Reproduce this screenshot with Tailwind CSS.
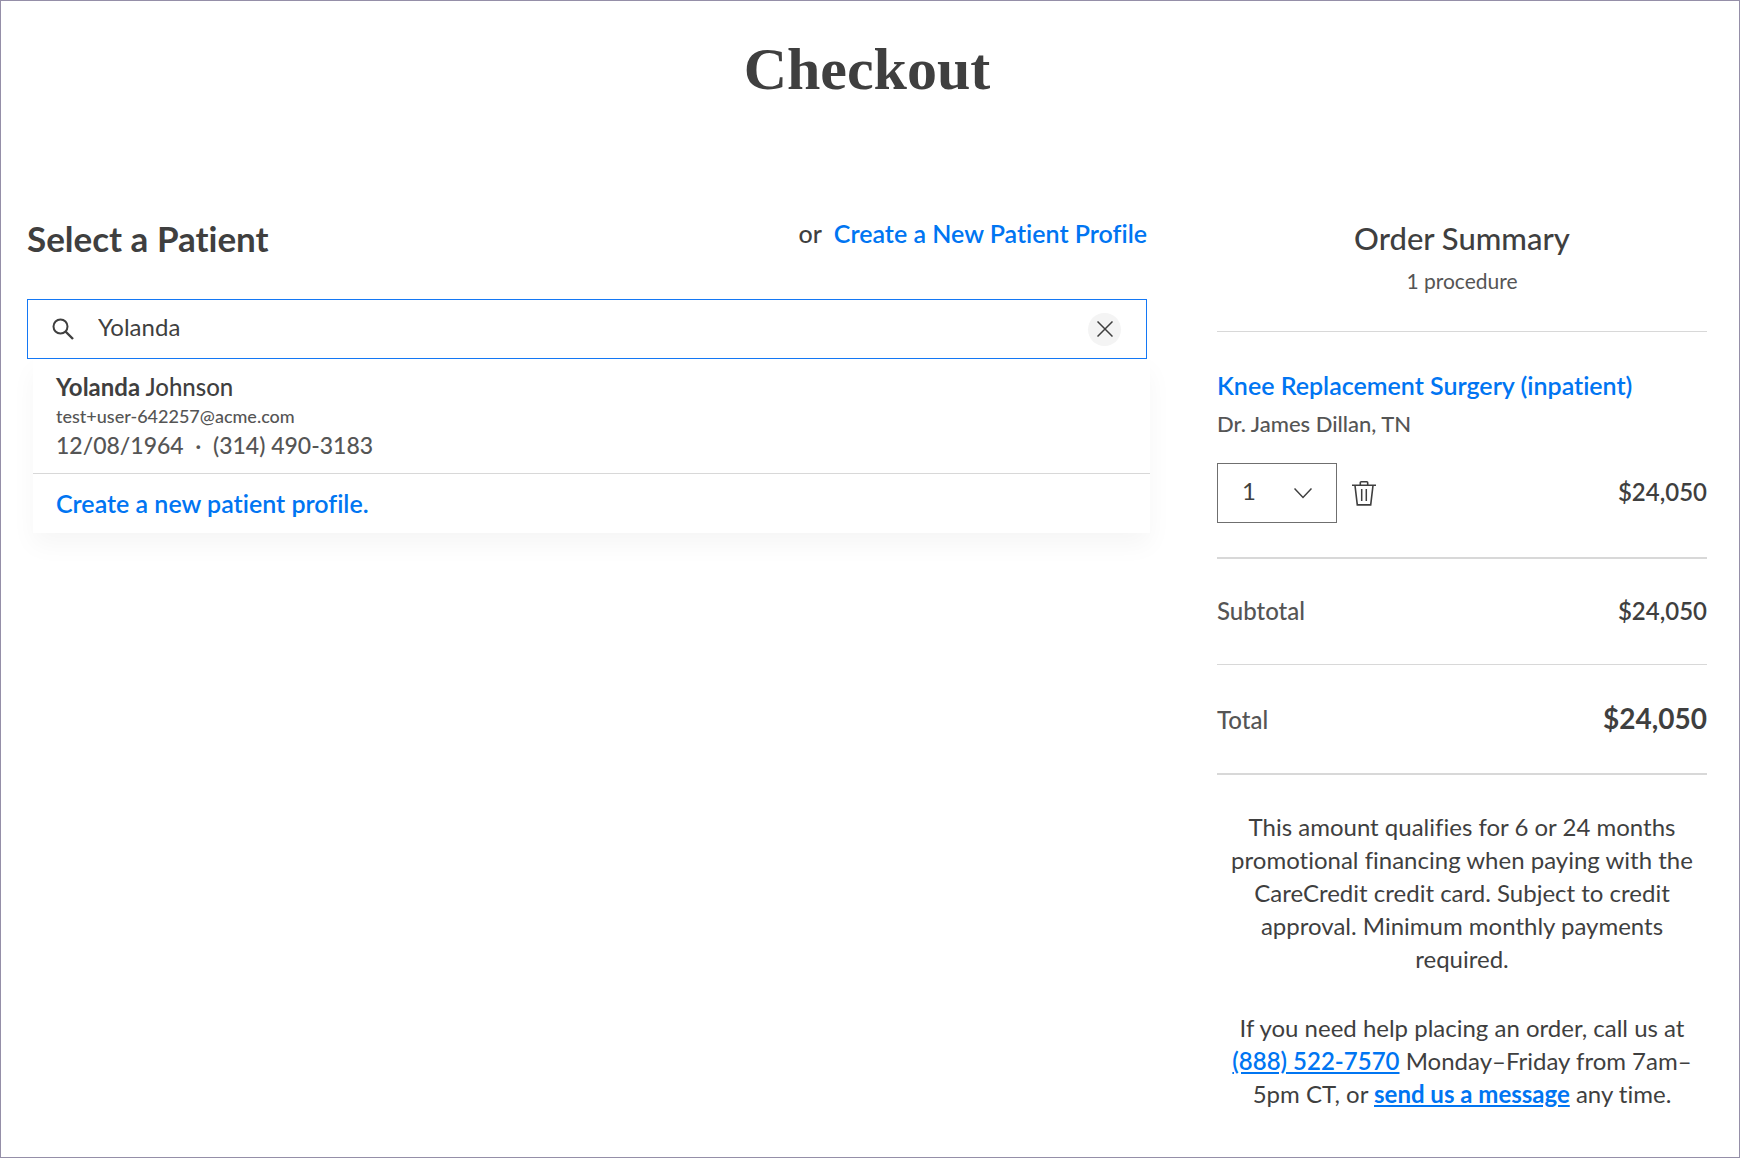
<!DOCTYPE html>
<html lang="en">
<head>
<meta charset="utf-8">
<meta name="viewport" content="width=device-width, initial-scale=1">
<title>Checkout</title>
<script src="https://cdn.jsdelivr.net/npm/@tailwindcss/browser@4"></script>
</head>
<body class="min-h-screen border border-[#958fa8] bg-white pt-[38px] pr-8 pb-9 pl-[26px] font-[Lato,sans-serif] text-2xl/8 text-[#3f3f3f] [font-variant-ligatures:none]">
  <header>
    <h1 class="text-center font-['Liberation_Serif',serif] text-[60px]/[60px] font-bold">Checkout</h1>
  </header>

  <main class="mt-[118px] flex items-start gap-[70px]">
    <section class="min-w-0 flex-1">
      <div class="mb-10 flex items-start justify-between">
        <h2 class="text-[35px]/[42px] font-bold">Select a Patient</h2>
        <p class="flex gap-3 text-[25px]/8 font-medium">or <a href="#new" class="font-semibold text-[#0075f2]">Create a New Patient Profile</a></p>
      </div>

      <div class="relative">
        <form role="search" class="flex h-[60px] items-center border border-[#1478f5] pr-[25px] pl-6">
          <label for="patient" class="mr-6" aria-label="Search patients">
            <svg class="size-[22px]" viewBox="0 0 22 22" fill="none" stroke="#3f3f3f" stroke-width="2"><circle cx="8.5" cy="8.5" r="7"/><path d="M13.5 13.5l7.5 7.5" stroke-width="2.4"/></svg>
          </label>
          <input id="patient" type="text" value="Yolanda" autocomplete="off" class="h-full min-w-0 flex-1 pb-1.5 outline-none">
          <button type="button" aria-label="Clear search" class="grid size-[33px] place-items-center rounded-full bg-[#f4f4f4]">
            <svg class="size-4" viewBox="0 0 16 16" fill="none" stroke="#3f3f3f" stroke-width="1.5"><path d="M.5.5l15 15M15.5.5l-15 15"/></svg>
          </button>
        </form>

        <!-- Matching patients -->
        <div class="absolute top-full -right-[3px] left-1.5 bg-white shadow-[0_12px_24px_rgba(0,0,0,0.04)]">
          <button type="button" class="block w-full px-[23px] py-3 text-left">
            <span class="block font-medium"><strong>Yolanda</strong> Johnson</span>
            <span class="block text-lg/[26px] font-medium text-[#555]">test+user-642257@acme.com</span>
            <span class="block text-[23px]/8 font-medium text-[#555]">12/08/1964 &nbsp;· &nbsp;(314) 490-3183</span>
          </button>
          <a href="#new" class="block border-t border-[#d8d8d8] px-[23px] pt-[13px] pb-3.5 text-[25px]/8 font-semibold text-[#0075f2]">Create a new patient profile.</a>
        </div>
      </div>
    </section>

    <aside class="w-[490px] shrink-0">
      <div class="border-b border-[#d8d8d8] pb-9 text-center">
        <h2 class="text-[31px]/[42px] font-medium">Order Summary</h2>
        <p class="mt-2 text-[21px]/7 text-[#555]">1 procedure</p>
      </div>

      <div class="border-b-2 border-[#d8d8d8] pt-[37px] pb-[34px]">
        <a href="#procedure" class="block text-[25px]/8 font-semibold text-[#0075f2]">Knee Replacement Surgery (inpatient)</a>
        <p class="mt-2 text-[22px]/[30px] font-medium text-[#555]">Dr. James Dillan, TN</p>
        <div class="mt-6 flex items-center">
          <div class="relative">
            <select aria-label="Quantity" class="h-[60px] w-[120px] appearance-none border border-[#6f6f6f] bg-white pb-1 pl-6"><option>1</option><option>2</option><option>3</option></select>
            <svg class="pointer-events-none absolute top-[25px] right-[25px] h-[11px] w-[18px]" viewBox="0 0 18 11" fill="none" stroke="#3f3f3f" stroke-width="1.5"><path d="M.5.5L9 9.5 17.5.5"/></svg>
          </div>
          <button type="button" aria-label="Remove procedure" class="ml-[15px]">
            <svg class="h-[25px] w-6" viewBox="0 0 24 25" fill="none" stroke="#3f3f3f" stroke-width="1.6"><path d="M0 4.2h24M8.3 4V1.7a.9.9 0 0 1 .9-.9h5.6a.9.9 0 0 1 .9.9V4M3 4.5l2.3 19.400h13.400L21 4.500"/><path d="M9.700 8v12M14.300 8v12" stroke-width="1.5"/></svg>
          </button>
          <span class="ml-auto pb-0.5 font-semibold">$24,050</span>
        </div>
      </div>

      <dl class="font-semibold">
        <div class="flex items-baseline justify-between border-b border-[#d8d8d8] pt-9 pb-[37px]">
          <dt class="font-medium text-[#555]">Subtotal</dt>
          <dd>$24,050</dd>
        </div>
        <div class="flex items-baseline justify-between border-b-2 border-[#d8d8d8] pt-[35px] pb-[37px]">
          <dt class="font-medium text-[#555]">Total</dt>
          <dd class="text-[28px]/9 font-bold">$24,050</dd>
        </div>
      </dl>

      <div class="space-y-9 pt-[35px] text-center leading-[33px]">
        <p>This amount qualifies for 6 or 24 months promotional financing when paying with the CareCredit credit card. Subject to credit approval. Minimum monthly payments required.</p>
        <p>If you need help placing an order, call us at <a href="tel:+18885227570" class="font-semibold text-[#0075f2] underline">(888) 522-7570</a> Monday–Friday from 7am–5pm CT, or <a href="#message" class="font-bold text-[#0075f2] underline">send us a message</a> any time.</p>
      </div>
    </aside>
  </main>
</body>
</html>
